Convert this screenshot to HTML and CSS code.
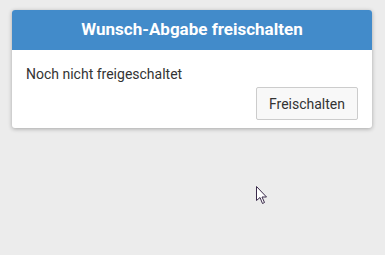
FILE: index.html
```html
<!DOCTYPE html>
<html lang="de">
<head>
<meta charset="utf-8">
<link rel="stylesheet" href="styles.css">
</head>
<body>
<div class="card">
  <div class="card-header">Wunsch-Abgabe freischalten</div>
  <div class="card-body">
    <p class="status">Noch nicht freigeschaltet</p>
    <div class="actions"><button class="btn">Freischalten</button></div>
  </div>
</div>
<svg class="cursor" width="12" height="19" viewBox="0 0 12 19"><path d="M0.5 0.5 L0.5 14.5 L4 11.5 L6.5 17.5 L8.5 16.5 L6 11 L10.5 11 Z" fill="#fff" stroke="#3a2a4a" stroke-width="1"/></svg>
</body>
</html>
```
FILE: styles.css
```css
html, body { margin: 0; padding: 0; }
body {
  background: #ececec;
  width: 385px;
  height: 255px;
  font-family: Roboto, "Liberation Sans", sans-serif;
  padding: 10px 13px 0 12px;
  box-sizing: border-box;
  position: relative;
  overflow: hidden;
}
.card {
  background: #fff;
  border-radius: 3px;
  box-shadow: 0 1px 4px rgba(0,0,0,0.3);
  overflow: hidden;
}
.card-header {
  background: #428bca;
  color: #fff;
  font-weight: bold;
  font-size: 17px;
  height: 40px;
  line-height: 39px;
  text-align: center;
}
.card-body {
  padding: 16px 14px 8px 14px;
}
.status {
  margin: 0;
  font-size: 14px;
  line-height: 17px;
  color: #333;
}
.actions {
  display: flex;
  justify-content: flex-end;
  margin-top: 4px;
}
.btn {
  font-family: inherit;
  font-size: 14px;
  color: #333;
  background: #f8f8f8;
  border: 1px solid #ccc;
  border-radius: 2px;
  height: 33px;
  padding: 0 12px;
}
.cursor {
  position: absolute;
  left: 256px;
  top: 186px;
}
```
